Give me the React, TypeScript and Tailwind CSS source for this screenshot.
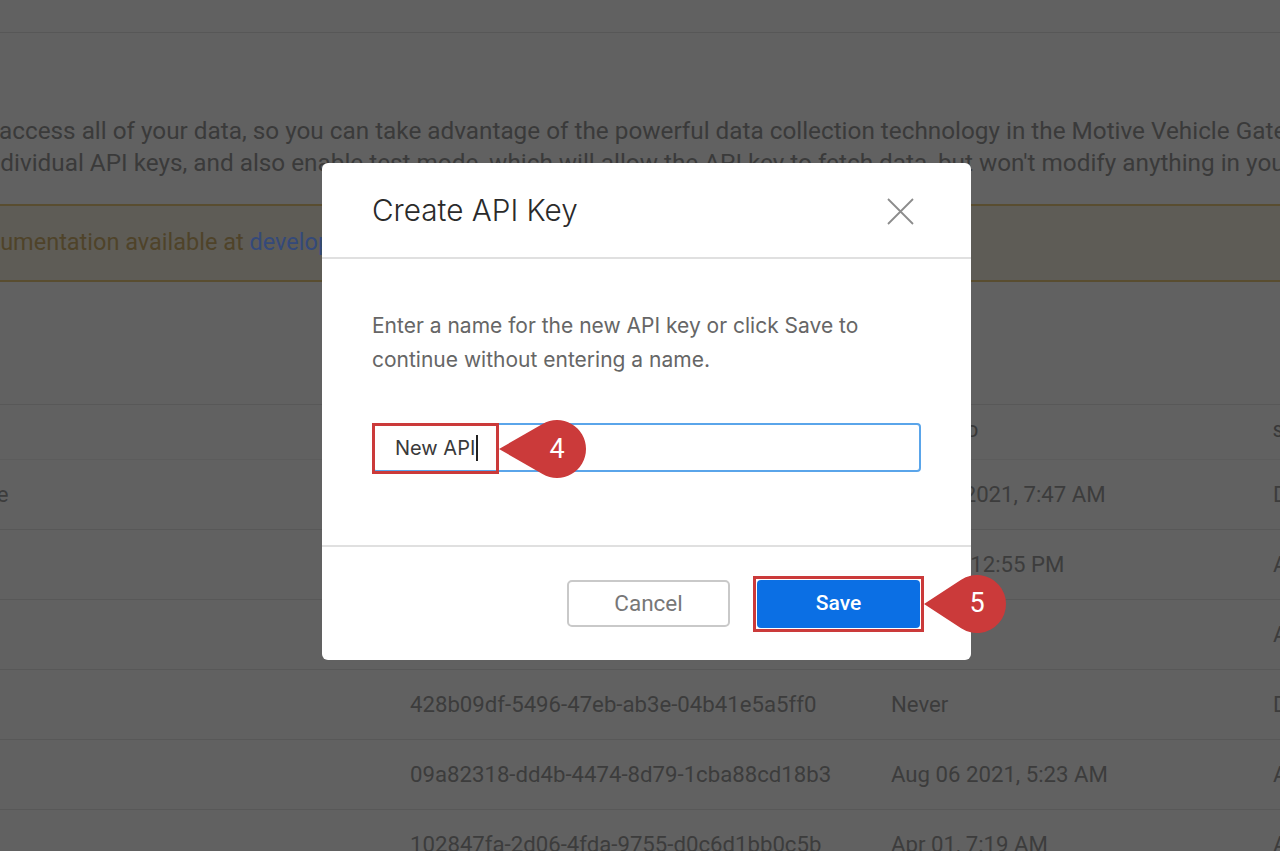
import React from 'react';

type KeyRow = {
  name: string;
  apiKey: string;
  lastUsed: string;
  status: string;
};

const rows: KeyRow[] = [
  { name: 'Route Update', apiKey: '5c1e7b02-81af-4d3c-9e2b-7a0d3f6c18e4', lastUsed: 'Jun 14 2021, 7:47 AM', status: 'Disabled' },
  { name: 'Fuel Sync', apiKey: 'b7d20c41-3e9a-4f51-a0c2-6e8b19d4f2a7', lastUsed: 'Mar 16, 12:55 PM', status: 'Active' },
  { name: 'Dispatch', apiKey: 'e3f94a10-7c2d-4b88-91a6-0d5c7e2b4f19', lastUsed: 'Never', status: 'Active' },
  { name: 'Old Export', apiKey: '428b09df-5496-47eb-ab3e-04b41e5a5ff0', lastUsed: 'Never', status: 'Disabled' },
  { name: 'Telematics', apiKey: '09a82318-dd4b-4474-8d79-1cba88cd18b3', lastUsed: 'Aug 06 2021, 5:23 AM', status: 'Active' },
  { name: 'Reporting', apiKey: '102847fa-2d06-4fda-9755-d0c6d1bb0c5b', lastUsed: 'Apr 01, 7:19 AM', status: 'Active' },
];

// red numbered pin used by the tutorial annotations; d = tip-to-centre distance
const pinPath = (d: number, r: number) => {
  const c = r / d;
  const s = Math.sqrt(1 - c * c);
  const tx = d - r * c;
  return `M0 ${r} L${tx} ${r - r * s} A${r} ${r} 0 1 1 ${tx} ${r + r * s} Z`;
};

const Callout: React.FC<{ n: number; d: number; r: number; className: string }> = ({ n, d, r, className }) => (
  <div className={`absolute ${className}`} style={{ width: d + r, height: r * 2 }}>
    <svg width={d + r} height={r * 2} viewBox={`0 0 ${d + r} ${r * 2}`} className="absolute inset-0">
      <path d={pinPath(d, r)} fill="#cb3a3a" />
    </svg>
    <span
      className="absolute top-0 flex items-center justify-center text-white text-[27px] font-['Roboto',sans-serif]"
      style={{ left: d - r, width: r * 2, height: r * 2 }}
    >
      {n}
    </span>
  </div>
);

const App: React.FC = () => {
  return (
    <div className="relative w-full h-[851px] overflow-hidden bg-[#616161] font-['Roboto',sans-serif] text-[#3a3a3a]">
      {/* dimmed page behind the dialog */}
      <div className="h-[33px] border-b border-[#575757]" />

      <div className="mt-[82px] text-[24.3px] leading-[32px] whitespace-nowrap">
        <p className="-ml-px">
          access all of your data, so you can take advantage of the powerful data collection technology in the Motive Vehicle Gateway.
        </p>
        <p className="-ml-[19px]">
          individual API keys, and also enable test mode, which will allow the API key to fetch data, but won't modify anything in your account.
        </p>
      </div>

      <div className="mt-[25px] h-[78px] flex items-center border-y-2 border-[#594d30] bg-[#5e5c56] text-[23.5px] text-[#4f4329] whitespace-nowrap">
        <span className="-ml-[41px]">
          Documentation available at <span className="text-[#34497a]">developer.gomotive.com</span>
        </span>
      </div>

      <div className="mt-[122px] -ml-[125px] w-[1600px] border-t border-[#585858]">
        <div className="flex h-[55px] items-center border-b border-[#5c5c5c] text-[16px] font-medium uppercase tracking-[0.04em] text-[#383838]">
          <div className="w-[535px]">Name</div>
          <div className="w-[481px]">API Key</div>
          <div className="w-[382px]">Last Used</div>
          <div>Status</div>
        </div>
        {rows.map((r) => (
          <div key={r.apiKey} className="flex h-[70px] items-center border-b border-[#585858] text-[22.2px] text-[#3c3c3c]">
            <div className="w-[535px]">{r.name}</div>
            <div className="w-[481px]">{r.apiKey}</div>
            <div className="w-[382px]">{r.lastUsed}</div>
            <div>{r.status}</div>
          </div>
        ))}
      </div>

      {/* dialog */}
      <div className="absolute left-[322px] top-[163px] w-[649px] h-[497px] rounded-[6px] bg-white flex flex-col font-['Inter',sans-serif]">
        <div className="h-[96px] shrink-0 flex items-center justify-between pl-[50px] pr-[57px] border-b-2 border-[#e0e0e0]">
          <h2 className="text-[29.7px] text-[#2a2a2a] font-light">Create API Key</h2>
          <svg width="27" height="27" viewBox="0 0 27 27" className="mt-[2px]">
            <path d="M1 1 L26 26 M26 1 L1 26" stroke="#8c8c8c" strokeWidth="1.8" />
          </svg>
        </div>

        <div className="flex-1 px-[50px] pt-[50px]">
          <p className="max-w-[520px] text-[21px] leading-[34px] text-[#666]">
            Enter a name for the new API key or click Save to continue without entering a name.
          </p>
          <div className="relative mt-[46px] h-[49px] rounded-[4px] border-2 border-[#5aa5ea] flex items-center pl-[21px] text-[20px] text-[#3a3a3a]">
            <span>New API</span>
            <span className="ml-px w-[2px] h-[26px] bg-[#222]" />
            <div className="absolute -left-[2px] -top-[2px] w-[127px] h-[51px] border-[3px] border-[#cb3a3a]" />
            <Callout n={4} d={58} r={29} className="left-[125px] -top-[5px]" />
          </div>
        </div>

        <div className="h-[115px] shrink-0 border-t-2 border-[#e0e0e0] flex items-center justify-end gap-[27px] pr-[51px] font-['Roboto',sans-serif]">
          <button className="w-[163px] h-[47px] rounded-[5px] border-2 border-[#c9c9c9] bg-white text-[22.5px] text-[#777]">
            Cancel
          </button>
          <div className="relative">
            <button className="w-[163px] h-[48px] rounded-[4px] bg-[#0b6fe4] text-[21px] font-medium text-white">
              Save
            </button>
            <div className="absolute -inset-[4px] border-[3px] border-[#cb3a3a]" />
            <Callout n={5} d={53} r={29} className="left-[167px] -top-[5px]" />
          </div>
        </div>
      </div>
    </div>
  );
};

export default App;
